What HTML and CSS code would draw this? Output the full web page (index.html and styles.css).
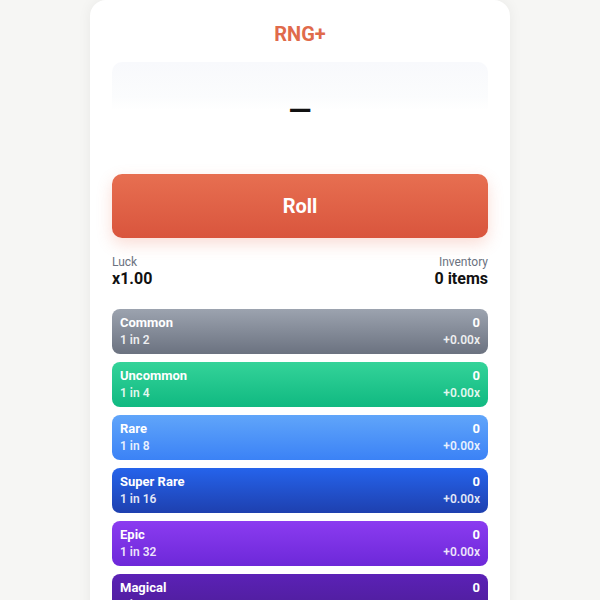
FILE: index.html
```html
<!DOCTYPE html>
<html>
<head>
<meta charset="utf-8">
<link rel="stylesheet" href="styles.css">
</head>
<body>
<div class="app">
  <h1 class="title">RNG+</h1>
  <div class="result"><span class="dash">—</span></div>
  <button class="roll">Roll</button>
  <div class="stats">
    <div class="stat"><div class="label">Luck</div><div class="value">x1.00</div></div>
    <div class="stat right"><div class="label">Inventory</div><div class="value">0 items</div></div>
  </div>
  <div class="rarities">
    <div class="rarity common"><div class="line"><span class="name">Common</span><span class="count">0</span></div><div class="line sub"><span>1 in 2</span><span>+0.00x</span></div></div>
    <div class="rarity uncommon"><div class="line"><span class="name">Uncommon</span><span class="count">0</span></div><div class="line sub"><span>1 in 4</span><span>+0.00x</span></div></div>
    <div class="rarity rare"><div class="line"><span class="name">Rare</span><span class="count">0</span></div><div class="line sub"><span>1 in 8</span><span>+0.00x</span></div></div>
    <div class="rarity superrare"><div class="line"><span class="name">Super Rare</span><span class="count">0</span></div><div class="line sub"><span>1 in 16</span><span>+0.00x</span></div></div>
    <div class="rarity epic"><div class="line"><span class="name">Epic</span><span class="count">0</span></div><div class="line sub"><span>1 in 32</span><span>+0.00x</span></div></div>
    <div class="rarity magical"><div class="line"><span class="name">Magical</span><span class="count">0</span></div><div class="line sub"><span>1 in 64</span><span>+0.00x</span></div></div>
  </div>
</div>
</body>
</html>
```
FILE: styles.css
```css
* { box-sizing: border-box; }
body {
  margin: 0;
  background: #f6f6f4;
  font-family: Roboto, "Liberation Sans", sans-serif;
}
.app {
  width: 420px;
  margin: 0 auto;
  background: #ffffff;
  border-radius: 16px 16px 0 0;
  padding: 22px 22px 22px;
  box-shadow: 0 0 14px rgba(0,0,0,0.06);
  min-height: 700px;
}
.title {
  margin: 0;
  text-align: center;
  font-size: 20px;
  line-height: 24px;
  font-weight: 700;
  color: #e06a4b;
}
.result {
  margin-top: 16px;
  height: 88px;
  border-radius: 10px;
  background: linear-gradient(#f8f9fc 0%, #fbfcfd 40%, #ffffff 55%);
  display: flex;
  align-items: center;
  justify-content: center;
  padding-top: 4px;
}
.dash {
  font-size: 30px;
  line-height: 30px;
  font-weight: 700;
  color: #111;
  position: relative;
  top: 3px;
}
.roll {
  display: block;
  width: 100%;
  margin-top: 24px;
  height: 64px;
  border: none;
  border-radius: 10px;
  background: linear-gradient(#e76f51, #d9553d);
  color: #fff;
  font-family: Roboto, "Liberation Sans", sans-serif;
  font-size: 20px;
  font-weight: 700;
  box-shadow: 0 6px 16px rgba(230, 100, 70, 0.22);
}
.stats {
  margin-top: 17px;
  display: flex;
  justify-content: space-between;
}
.stat.right { text-align: right; }
.label {
  font-size: 12px;
  line-height: 14px;
  color: #6b7280;
}
.value {
  margin-top: 1px;
  font-size: 16px;
  line-height: 18px;
  font-weight: 700;
  color: #111;
}
.rarities {
  margin-top: 21px;
  display: flex;
  flex-direction: column;
  gap: 8px;
}
.rarity {
  height: 45px;
  border-radius: 8px;
  padding: 5px 8px 4px;
  color: #fff;
}
.line {
  display: flex;
  justify-content: space-between;
  font-size: 13px;
  line-height: 17px;
  font-weight: 700;
}
.line.sub {
  font-size: 12px;
  line-height: 19px;
  align-items: flex-end;
  font-weight: 600;
  color: rgba(255,255,255,0.88);
}
.common { background: linear-gradient(#9ca3af, #6b7280); }
.uncommon { background: linear-gradient(#34d399, #10b981); }
.rare { background: linear-gradient(#60a5fa, #3b82f6); }
.superrare { background: linear-gradient(#2563eb, #1e40af); }
.epic { background: linear-gradient(#8b3cf0, #6d28d9); }
.magical { background: linear-gradient(#5b21b6, #4c1d95); }
```
